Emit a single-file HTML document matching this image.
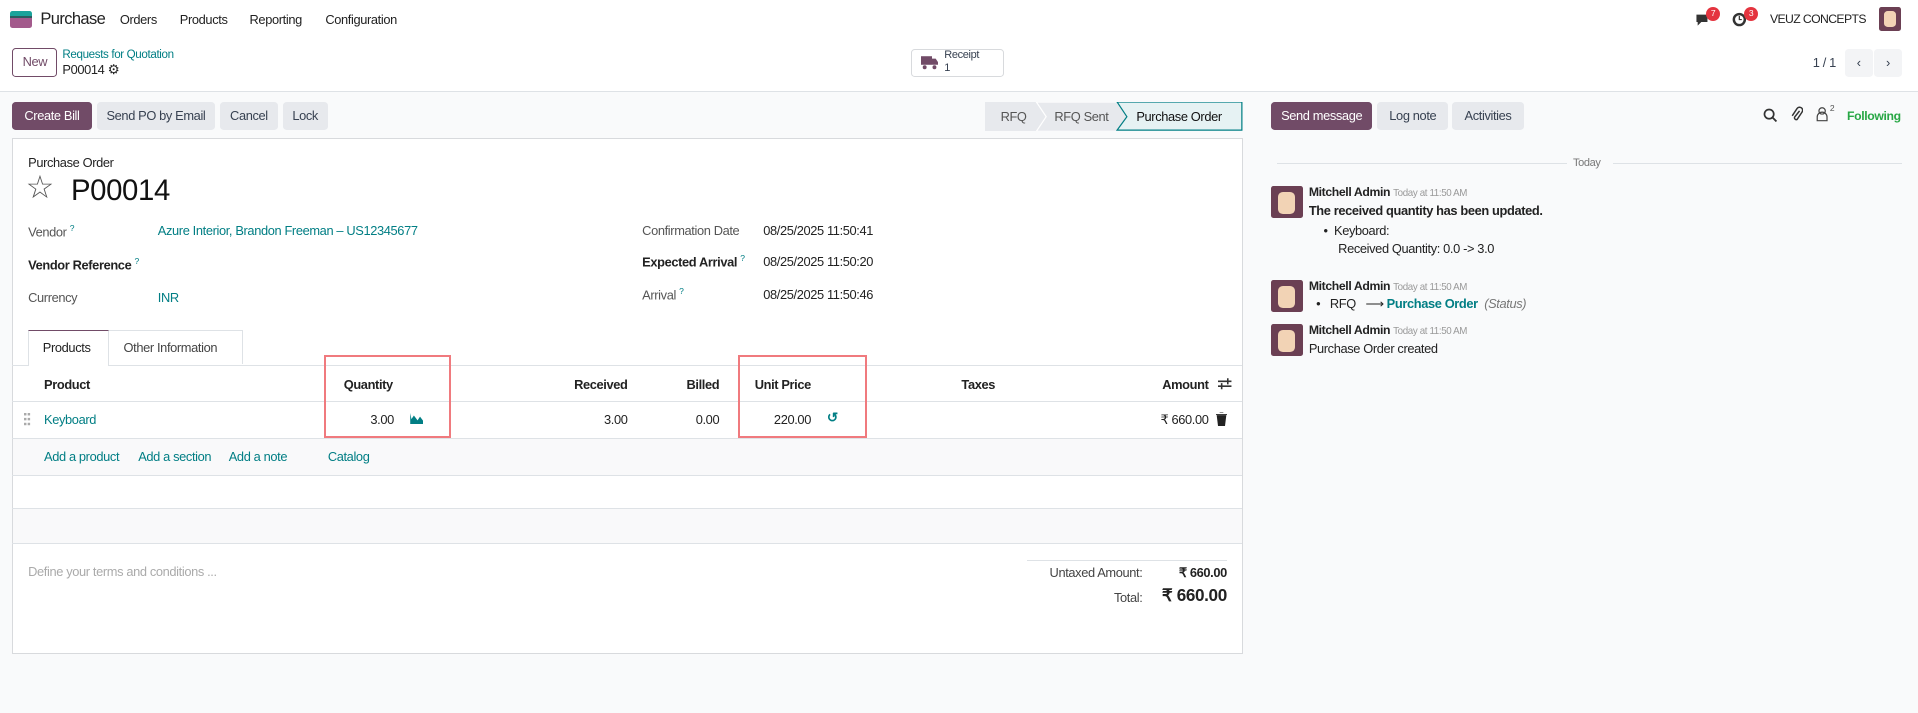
<!DOCTYPE html>
<html><head><meta charset="utf-8"><style>
*{box-sizing:border-box;margin:0;padding:0}
html,body{width:1918px;height:713px;overflow:hidden;background:#f9fafb}
#w{zoom:1.2232;width:1568px;height:583px;position:relative;font-family:"Liberation Sans",sans-serif;font-size:10.5px;color:#374151;letter-spacing:-0.3px}
.a{position:absolute;white-space:nowrap}
.top{position:absolute;left:0;top:0;width:1568px;height:75px;background:#fff;border-bottom:1px solid #dee2e6}
.btn{position:absolute;height:23px;line-height:23px;border-radius:3px;text-align:center;background:#e7e9ed;color:#374151}
.pur{background:#714b67;color:#fff}
.teal{color:#017e84}
.sheet{position:absolute;left:10px;top:113px;width:1006px;height:422px;background:#fff;border:1px solid #d8dadd}
.hl{position:absolute;left:10px;width:1005px;height:1px;background:#dee2e6}
.r{text-align:right}
.b{font-weight:bold;color:#222}
</style></head><body><div id="w">
<div class="top"></div>
<div class="a" style="left:8px;top:9px;width:18px;height:14px;border-radius:2px;overflow:hidden"><div style="height:4px;background:#1aa39b"></div><div style="height:2px;background:#2a5d60"></div><div style="height:8px;background:#a35a8c"></div></div>
<div class="a" style="left:33px;top:8px;font-size:13.5px;color:#222;letter-spacing:-0.5px">Purchase</div>
<div class="a" style="left:98px;top:10px;color:#222">Orders</div>
<div class="a" style="left:147px;top:10px;color:#222">Products</div>
<div class="a" style="left:204px;top:10px;color:#222">Reporting</div>
<div class="a" style="left:266px;top:10px;color:#222">Configuration</div>
<svg class="a" style="left:1385px;top:9px" width="14" height="14"><path d="M2 3h9v6H6l-3 3V9H2z" fill="#333"/></svg>
<div class="a" style="left:1395px;top:6px;width:11px;height:11px;border-radius:6px;background:#e4343f;color:#fff;font-size:7px;text-align:center;line-height:11px">7</div>
<svg class="a" style="left:1416px;top:9px" width="14" height="14"><circle cx="6" cy="7" r="4.5" fill="none" stroke="#333" stroke-width="2"/><path d="M6 4v3h2" stroke="#333" fill="none"/></svg>
<div class="a" style="left:1426px;top:6px;width:11px;height:11px;border-radius:6px;background:#e4343f;color:#fff;font-size:7px;text-align:center;line-height:11px">3</div>
<div class="a" style="left:1447px;top:10px;font-size:10px;color:#222;letter-spacing:-0.5px">VEUZ CONCEPTS</div>
<div class="a" style="left:1536px;top:6px;width:18px;height:19px;background:#6b3f53;border-radius:2px"><div style="margin:3px 4px;width:10px;height:13px;background:#f2d3b5;border-radius:3px"></div></div>

<div class="a" style="left:10px;top:39px;width:37px;height:24px;border:1px solid #714b67;border-radius:3px;line-height:22px;text-align:center;color:#714b67">New</div>
<div class="a teal" style="left:51px;top:39px;font-size:9.5px">Requests for Quotation</div>
<div class="a" style="left:51px;top:51px;color:#222">P00014 <span style="font-size:11px">⚙</span></div>
<div class="a" style="left:745px;top:40px;width:76px;height:23px;border:1px solid #d8dadd;border-radius:3px"></div>
<svg class="a" style="left:753px;top:45px" width="14" height="12"><rect x="0" y="1" width="9" height="7" fill="#714b67"/><path d="M9 3h3l2 3v2H9z" fill="#714b67"/><circle cx="3" cy="10" r="1.6" fill="#714b67"/><circle cx="11" cy="10" r="1.6" fill="#714b67"/></svg>
<div class="a" style="left:772px;top:40px;font-size:9px;line-height:11px;color:#374151">Receipt<br>1</div>
<div class="a" style="left:1482px;top:45px;color:#374151">1 / 1</div>
<div class="btn" style="left:1508px;top:40px;width:23px;background:#f3f4f6">‹</div>
<div class="btn" style="left:1532px;top:40px;width:23px;background:#f3f4f6">›</div>

<div class="btn pur" style="left:10px;top:83px;width:65px">Create Bill</div>
<div class="btn" style="left:79px;top:83px;width:97px">Send PO by Email</div>
<div class="btn" style="left:180px;top:83px;width:47px">Cancel</div>
<div class="btn" style="left:231px;top:83px;width:37px">Lock</div>
<svg class="a" style="left:805px;top:83px" width="212" height="24"><path d="M0 0H42L50 12L42 24H0Z" fill="#e7e9ed"/><path d="M42 0H108L116 12L108 24H42L50 12Z" fill="#e7e9ed" stroke="#fff"/><path d="M108 0H210V23H108L116 12Z" fill="#e6f2f3" stroke="#017e84"/></svg>
<div class="a" style="left:818px;top:89px;color:#555">RFQ</div>
<div class="a" style="left:862px;top:89px;color:#555">RFQ Sent</div>
<div class="a" style="left:929px;top:89px;color:#111">Purchase Order</div>
<div class="btn pur" style="left:1039px;top:83px;width:83px">Send message</div>
<div class="btn" style="left:1126px;top:83px;width:58px">Log note</div>
<div class="btn" style="left:1187px;top:83px;width:59px">Activities</div>
<svg class="a" style="left:1441px;top:88px" width="12" height="12"><circle cx="5" cy="5" r="3.8" stroke="#333" stroke-width="1.4" fill="none"/><path d="M8 8l3 3" stroke="#333" stroke-width="1.5"/></svg>
<svg class="a" style="left:1464px;top:87px" width="10" height="14"><path d="M7 4L3 9a1.5 1.5 0 0 0 2 2l4-6a2.5 2.5 0 0 0-4-3L1 8" fill="none" stroke="#333" stroke-width="1.2"/></svg>
<svg class="a" style="left:1485px;top:87px" width="10" height="13"><circle cx="5" cy="4" r="2.6" fill="none" stroke="#444"/><path d="M1 12V9a4 4 0 0 1 8 0v3z" fill="none" stroke="#444"/></svg>
<div class="a" style="left:1496px;top:84px;font-size:7px;color:#555">2</div>
<div class="a" style="left:1510px;top:89px;color:#28a745;font-weight:bold;font-size:10px">Following</div>

<div class="sheet"></div>
<div class="a" style="left:23px;top:127px;color:#222">Purchase Order</div>
<div class="a" style="left:21px;top:138px;font-size:26px;color:#555;line-height:30px">☆</div>
<div class="a" style="left:58px;top:142px;font-size:24px;color:#111">P00014</div>
<div class="a" style="left:23px;top:182px;color:#555">Vendor <sup class="teal" style="font-size:7px">?</sup></div>
<div class="a teal" style="left:129px;top:182px">Azure Interior, Brandon Freeman – US12345677</div>
<div class="a b" style="left:23px;top:209px">Vendor Reference <sup class="teal" style="font-size:7px;font-weight:normal">?</sup></div>
<div class="a" style="left:23px;top:237px;color:#555">Currency</div>
<div class="a teal" style="left:129px;top:237px">INR</div>
<div class="a" style="left:525px;top:182px;color:#555">Confirmation Date</div>
<div class="a" style="left:624px;top:182px;color:#222">08/25/2025 11:50:41</div>
<div class="a b" style="left:525px;top:207px">Expected Arrival <sup class="teal" style="font-size:7px;font-weight:normal">?</sup></div>
<div class="a" style="left:624px;top:208px;color:#222">08/25/2025 11:50:20</div>
<div class="a" style="left:525px;top:234px;color:#555">Arrival <sup class="teal" style="font-size:7px">?</sup></div>
<div class="a" style="left:624px;top:235px;color:#222">08/25/2025 11:50:46</div>

<div class="a" style="left:23px;top:270px;width:66px;height:29px;background:#fff;border:1px solid #dee2e6;border-top:1px solid #714b67;border-bottom:none;z-index:2"></div>
<div class="a" style="left:35px;top:278px;color:#222;z-index:3">Products</div>
<div class="a" style="left:89px;top:270px;width:110px;height:28px;border:1px solid #dee2e6;border-left:none;border-bottom:none"></div>
<div class="a" style="left:101px;top:278px;color:#444">Other Information</div>
<div class="hl" style="top:298px"></div>
<div class="a b" style="left:36px;top:308px">Product</div>
<div class="a b" style="left:281px;top:308px">Quantity</div>
<div class="a b r" style="left:413px;width:100px;top:308px">Received</div>
<div class="a b r" style="left:488px;width:100px;top:308px">Billed</div>
<div class="a b" style="left:617px;top:308px">Unit Price</div>
<div class="a b" style="left:786px;top:308px">Taxes</div>
<div class="a b r" style="left:888px;width:100px;top:308px">Amount</div>
<svg class="a" style="left:996px;top:308px" width="12" height="11"><path d="M0 3.5H11M8 1V6M0 7.5H11M3 5V10" stroke="#333" stroke-width="1.3"/></svg>
<div class="hl" style="top:328px"></div>
<svg class="a" style="left:20px;top:338px" width="6" height="10"><g fill="#aaa"><rect x="0" y="0" width="2" height="2"/><rect x="3" y="0" width="2" height="2"/><rect x="0" y="4" width="2" height="2"/><rect x="3" y="4" width="2" height="2"/><rect x="0" y="8" width="2" height="2"/><rect x="3" y="8" width="2" height="2"/></g></svg>
<div class="a teal" style="left:36px;top:337px">Keyboard</div>
<div class="a r" style="left:222px;width:100px;top:337px;color:#222">3.00</div>
<svg class="a" style="left:334px;top:338px" width="12" height="10"><path d="M1 0V9H12V7L9 3L7 6L4 2L2 5Z" fill="#017e84"/></svg>
<div class="a r" style="left:413px;width:100px;top:337px;color:#222">3.00</div>
<div class="a r" style="left:488px;width:100px;top:337px;color:#222">0.00</div>
<div class="a r" style="left:563px;width:100px;top:337px;color:#222">220.00</div>
<div class="a teal" style="left:676px;top:335px;font-size:11px;font-weight:bold">↺</div>
<div class="a r" style="left:888px;width:100px;top:337px;color:#222">₹ 660.00</div>
<svg class="a" style="left:994px;top:337px" width="9" height="11"><path d="M0 2H9M3 0H6M1 3H8L7 11H2Z" fill="#222" stroke="#222" stroke-width="0.8"/></svg>
<div class="hl" style="top:358px"></div>
<div class="a" style="left:11px;top:359px;width:1004px;height:29px;background:#f9f9fa"></div>
<div class="a teal" style="left:36px;top:367px">Add a product</div>
<div class="a teal" style="left:113px;top:367px">Add a section</div>
<div class="a teal" style="left:187px;top:367px">Add a note</div>
<div class="a teal" style="left:268px;top:367px">Catalog</div>
<div class="hl" style="top:388px"></div>
<div class="hl" style="top:415px"></div>
<div class="a" style="left:11px;top:416px;width:1004px;height:28px;background:#f9f9fa"></div>
<div class="hl" style="top:444px"></div>
<div class="a" style="left:23px;top:461px;color:#aaa">Define your terms and conditions ...</div>
<div class="a" style="left:840px;top:458px;width:163px;height:1px;background:#dee2e6"></div>
<div class="a r" style="left:800px;width:134px;top:462px;color:#444">Untaxed Amount:</div>
<div class="a r b" style="left:903px;width:100px;top:462px">₹ 660.00</div>
<div class="a r" style="left:800px;width:134px;top:482px;color:#444">Total:</div>
<div class="a r b" style="left:903px;width:100px;top:479px;font-size:14px">₹ 660.00</div>

<div class="a" style="left:265px;top:290px;width:104px;height:68px;border:2px solid #f07a7e"></div>
<div class="a" style="left:603px;top:290px;width:106px;height:68px;border:2px solid #f07a7e"></div>

<div class="a" style="left:1044px;top:133px;width:237px;height:1px;background:#dee2e6"></div>
<div class="a" style="left:1319px;top:133px;width:236px;height:1px;background:#dee2e6"></div>
<div class="a" style="left:1286px;top:128px;font-size:9px;color:#777">Today</div>

<div class="a" style="left:1039px;top:152px;width:26px;height:26px;background:#6b3f53;border-radius:2px"><div style="margin:5px 6px;width:14px;height:18px;background:#f2d3b5;border-radius:4px"></div></div>
<div class="a b" style="left:1070px;top:151px;font-size:10px">Mitchell Admin <span style="font-weight:normal;color:#999;font-size:8px">Today at 11:50 AM</span></div>
<div class="a b" style="left:1070px;top:166px">The received quantity has been updated.</div>
<div class="a" style="left:1082px;top:182px;color:#222">• &nbsp;Keyboard:</div>
<div class="a" style="left:1094px;top:197px;color:#222">Received Quantity: 0.0 -&gt; 3.0</div>

<div class="a" style="left:1039px;top:229px;width:26px;height:26px;background:#6b3f53;border-radius:2px"><div style="margin:5px 6px;width:14px;height:18px;background:#f2d3b5;border-radius:4px"></div></div>
<div class="a b" style="left:1070px;top:228px;font-size:10px">Mitchell Admin <span style="font-weight:normal;color:#999;font-size:8px">Today at 11:50 AM</span></div>
<div class="a" style="left:1076px;top:242px;color:#222">• &nbsp; RFQ &nbsp;&nbsp;⟶ <span class="teal" style="font-weight:bold">Purchase Order</span> &nbsp;<i style="color:#777">(Status)</i></div>

<div class="a" style="left:1039px;top:265px;width:26px;height:26px;background:#6b3f53;border-radius:2px"><div style="margin:5px 6px;width:14px;height:18px;background:#f2d3b5;border-radius:4px"></div></div>
<div class="a b" style="left:1070px;top:264px;font-size:10px">Mitchell Admin <span style="font-weight:normal;color:#999;font-size:8px">Today at 11:50 AM</span></div>
<div class="a" style="left:1070px;top:279px;color:#222">Purchase Order created</div>
</div></body></html>
